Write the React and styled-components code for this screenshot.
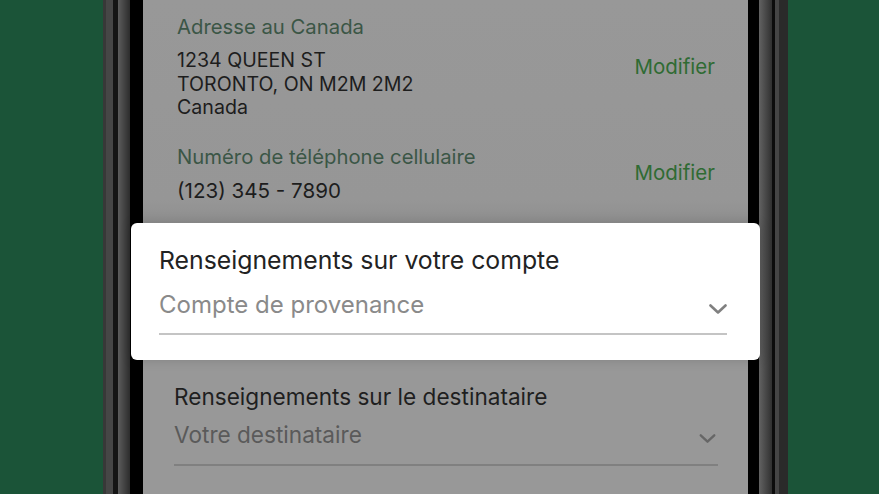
import React from "react";
import styled, { createGlobalStyle } from "styled-components";

const GlobalStyle = createGlobalStyle`
    html, body {
        margin: 0;
        padding: 0;
        background: #1b5438;
        overflow: hidden;
    }
    body {
        font-family: Inter, "Noto Sans", "Liberation Sans", sans-serif;
    }
`;

const Stage = styled.div`
    position: relative;
    display: flex;
    width: 879px;
    height: 494px;
    background: #1b5438;
`;

const Gap = styled.div`
    width: ${(p) => p.width}px;
    flex-shrink: 0;
`;

const BezelLeft = styled.div`
    width: 40px;
    flex-shrink: 0;
    background: linear-gradient(
        to right,
        #383838 0px, #383838 3px,
        #464646 3px, #464646 10px,
        #141414 10px, #141414 15px,
        #5c5c5c 15px, #2c2c2c 27px,
        #000 27px, #000 40px
    );
`;

const BezelRight = styled.div`
    width: 40px;
    flex-shrink: 0;
    background: linear-gradient(
        to right,
        #000 0px, #000 11px,
        #626262 11px, #303030 24px,
        #0c0c0c 24px, #0c0c0c 27px,
        #454545 27px, #454545 31px,
        #2a2a2a 31px, #2a2a2a 40px
    );
`;

const Screen = styled.div`
    width: 605px;
    flex-shrink: 0;
    background: linear-gradient(to bottom, #989898 0px, #969696 200px, #8f8f8f 222px, #989898 240px);
    padding: 15px 33px 0 34px;
    box-sizing: border-box;
`;

const InfoRow = styled.div`
    display: flex;
    align-items: center;
    justify-content: space-between;
    margin-bottom: ${(p) => p.spacing || 0}px;
`;

const InfoBlock = styled.div`
    display: flex;
    flex-direction: column;
`;

const Label = styled.div`
    font-size: 20.3px;
    line-height: 24px;
    color: #3b5646;
    margin-bottom: ${(p) => p.spacing}px;
`;

const Value = styled.div`
    font-size: ${(p) => p.size || 19.6}px;
    line-height: 23.5px;
    color: #1d1d1d;
`;

const EditLink = styled.a`
    font-size: 20.5px;
    line-height: 24px;
    color: #2f6b33;
    text-decoration: none;
`;

const Section = styled.div`
    margin: ${(p) => p.offset}px -3px 0 -3px;
`;

const SectionTitle = styled.div`
    font-size: ${(p) => p.size}px;
    line-height: 1.2;
    color: ${(p) => p.color};
`;

const SelectField = styled.div`
    display: flex;
    align-items: center;
    justify-content: space-between;
    border-bottom: 2px solid ${(p) => p.line};
    padding-bottom: ${(p) => p.pad}px;
    margin-top: ${(p) => p.top}px;
`;

const Placeholder = styled.span`
    font-size: ${(p) => p.size}px;
    line-height: 1.2;
    color: ${(p) => p.color};
`;

const Chevron = styled.svg`
    width: ${(p) => p.w}px;
    height: ${(p) => p.h}px;
    margin-top: ${(p) => p.shift}px;
    margin-right: ${(p) => p.inset}px;
    flex-shrink: 0;
`;

const Modal = styled.div`
    position: absolute;
    left: 131px;
    top: 223px;
    width: 629px;
    height: 137px;
    box-sizing: border-box;
    background: #fff;
    border-radius: 6px;
    padding: 23px 33px 0 28px;
    box-shadow: 0 0 12px rgba(0, 0, 0, 0.15);
`;

const ChevronIcon = ({ w, h, color, shift, inset = 0 }) => (
    <Chevron w={w} h={h} shift={shift} inset={inset} viewBox="0 0 18 10">
        <polyline points="1.5,1.5 9,8.5 16.5,1.5" fill="none" stroke={color} strokeWidth="2.6" strokeLinecap="round" strokeLinejoin="round" />
    </Chevron>
);

const App = () => {
    return (
        <>
            <GlobalStyle />
            <Stage>
                <Gap width={103} />
                <BezelLeft />
                <Screen>
                    <InfoRow spacing={25}>
                        <InfoBlock>
                            <Label spacing={10}>Adresse au Canada</Label>
                            <Value>1234 QUEEN ST</Value>
                            <Value>TORONTO, ON M2M 2M2</Value>
                            <Value>Canada</Value>
                        </InfoBlock>
                        <EditLink href="#">Modifier</EditLink>
                    </InfoRow>
                    <InfoRow>
                        <InfoBlock>
                            <Label spacing={10}>Numéro de téléphone cellulaire</Label>
                            <Value size={20.6}>(123) 345 - 7890</Value>
                        </InfoBlock>
                        <EditLink href="#">Modifier</EditLink>
                    </InfoRow>

                    <Section offset={181}>
                        <SectionTitle size={22.6} color="#1f1f1f">Renseignements sur le destinataire</SectionTitle>
                        <SelectField line="#808080" pad={16} top={11}>
                            <Placeholder size={22.6} color="#5a5a5a">Votre destinataire</Placeholder>
                            <ChevronIcon w={17} h={9} color="#666" shift={8} inset={2} />
                        </SelectField>
                    </Section>
                </Screen>
                <BezelRight />
                <Gap width={90} />

                <Modal>
                    <SectionTitle size={24.8} color="#222">Renseignements sur votre compte</SectionTitle>
                    <SelectField line="#c4c4c4" pad={13} top={15}>
                        <Placeholder size={24} color="#8a8a8a">Compte de provenance</Placeholder>
                        <ChevronIcon w={18} h={10} color="#808080" shift={8} />
                    </SelectField>
                </Modal>
            </Stage>
        </>
    );
};

export default App;
